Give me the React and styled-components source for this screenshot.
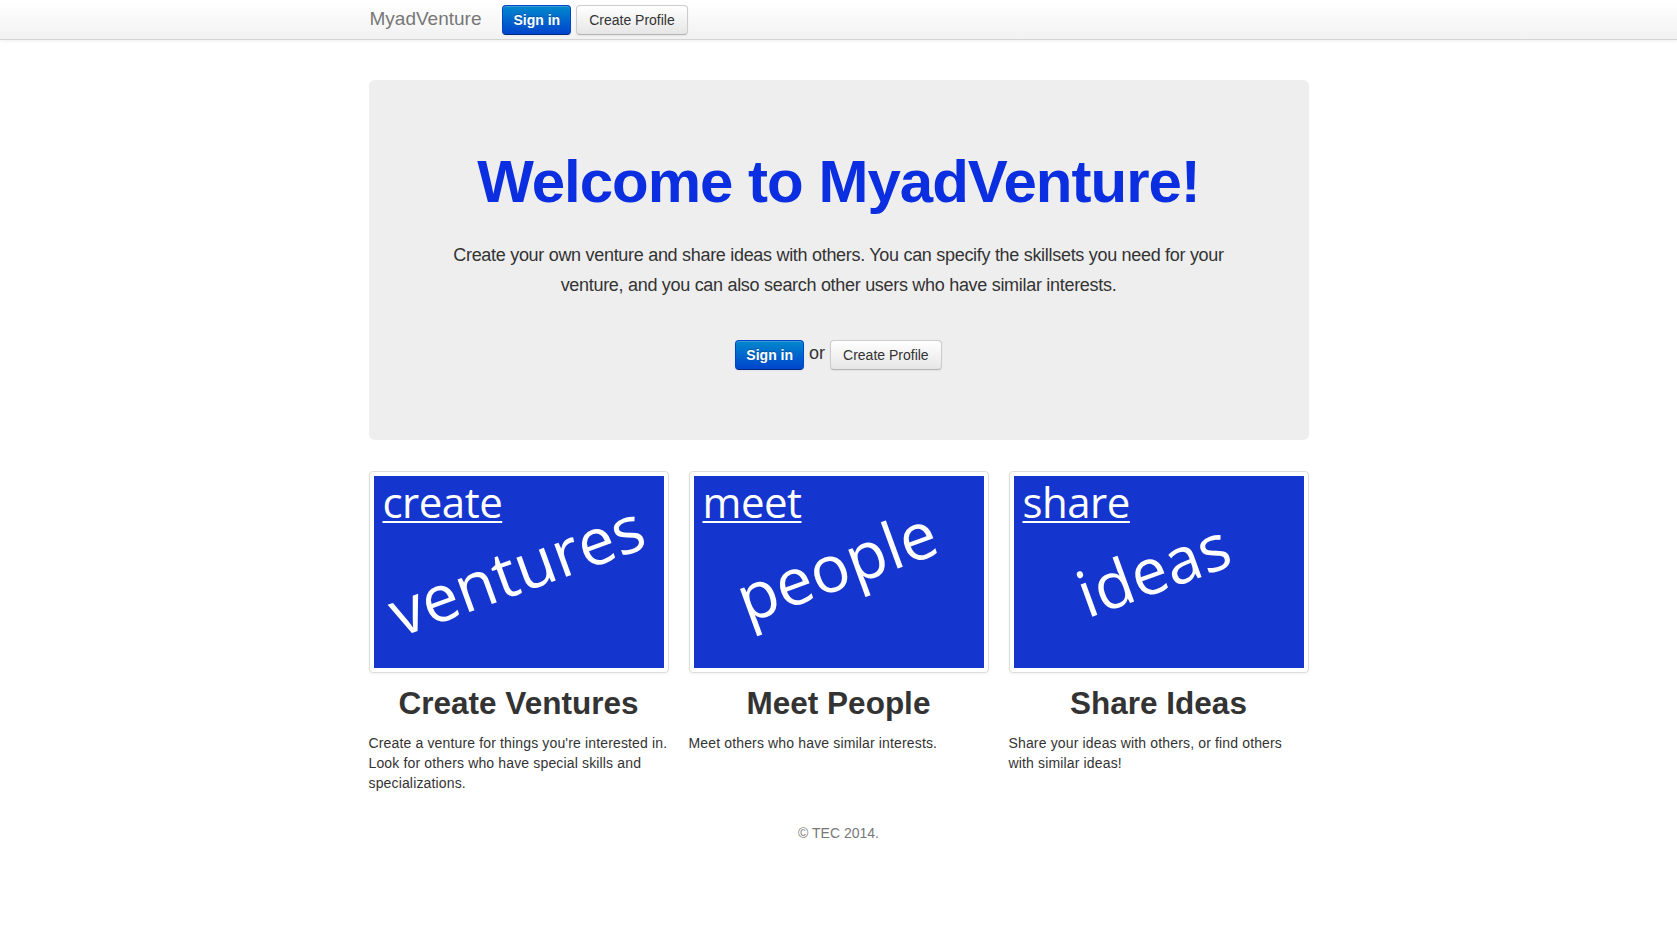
import React from "react";
import styled, { createGlobalStyle, css } from "styled-components";

const SANS = `"Liberation Sans", Arial, Helvetica, sans-serif`;
const THUMB_FONT = `"Open Sans", "Noto Sans", sans-serif`;

const features = [
  {
    key: "create",
    top: "create",
    big: "ventures",
    title: "Create Ventures",
    text: "Create a venture for things you're interested in. Look for others who have special skills and specializations.",
    bx: 142,
    by: 93,
    size: 65,
  },
  {
    key: "meet",
    top: "meet",
    big: "people",
    title: "Meet People",
    text: "Meet others who have similar interests.",
    bx: 142,
    by: 89,
    size: 65,
  },
  {
    key: "share",
    top: "share",
    big: "ideas",
    title: "Share Ideas",
    text: "Share your ideas with others, or find others with similar ideas!",
    bx: 139,
    by: 93,
    size: 64,
  },
];

function App() {
  return (
    <>
      <GlobalStyle />
      <Navbar>
        <NavInner>
          <Brand href="#">MyadVenture</Brand>
          <Button primary>Sign in</Button>
          <Button>Create Profile</Button>
        </NavInner>
      </Navbar>
      <Container>
        <Hero>
          <HeroTitle>Welcome to MyadVenture!</HeroTitle>
          <Lead>
            Create your own venture and share ideas with others. You can
            specify the skillsets you need for your venture, and you can also
            search other users who have similar interests.
          </Lead>
          <Actions>
            <Button primary>Sign in</Button>
            <Or>or</Or>
            <Button>Create Profile</Button>
          </Actions>
        </Hero>
        <Features>
          {features.map((f) => (
            <Feature key={f.key}>
              <Thumbnail>
                <Picture>
                  <TopWord>{f.top}</TopWord>
                  <BigWord
                    size={f.size}
                    style={{ left: f.bx, top: f.by }}
                  >
                    {f.big}
                  </BigWord>
                </Picture>
              </Thumbnail>
              <FeatureTitle>{f.title}</FeatureTitle>
              <FeatureText>{f.text}</FeatureText>
            </Feature>
          ))}
        </Features>
        <Footer>© TEC 2014.</Footer>
      </Container>
    </>
  );
}

const GlobalStyle = createGlobalStyle`
  body {
    margin: 0;
    background: #fff;
    font-family: ${SANS};
    font-size: 14px;
    line-height: 20px;
    color: #333;
  }
`;

const Navbar = styled.div`
  height: 39px;
  background-image: linear-gradient(to bottom, #ffffff, #f2f2f2);
  border-bottom: 1px solid #d4d4d4;
  box-shadow: 0 1px 4px rgba(0, 0, 0, 0.065);
`;

const NavInner = styled.div`
  width: 940px;
  margin: 0 auto;
  display: flex;
  align-items: flex-start;
  gap: 5px;
`;

const Brand = styled.a`
  display: block;
  padding: 9px 16px 10px 1px;
  font-size: 19px;
  line-height: 20px;
  color: #777;
  text-decoration: none;
`;

const primaryStyle = css`
  color: #fff;
  font-weight: bold;
  padding: 4px 10px;
  background-image: linear-gradient(to bottom, #0088cc, #0044cc);
  border-color: #0044cc #0044cc #002a80;
  text-shadow: 0 -1px 0 rgba(0, 0, 0, 0.25);
`;

const Button = styled.button`
  margin-top: 5px;
  height: 30px;
  padding: 4px 12px;
  font-family: ${SANS};
  font-size: 14px;
  line-height: 20px;
  color: #333;
  background-image: linear-gradient(to bottom, #ffffff, #e6e6e6);
  border: 1px solid #cccccc;
  border-bottom-color: #b3b3b3;
  border-radius: 4px;
  box-shadow: inset 0 1px 0 rgba(255, 255, 255, 0.2),
    0 1px 2px rgba(0, 0, 0, 0.05);
  cursor: pointer;
  ${(props) => props.primary && primaryStyle}
`;

const Container = styled.div`
  width: 940px;
  margin: 0 auto;
  padding-top: 40px;
`;

const Hero = styled.div`
  padding: 60px;
  margin-bottom: 31px;
  background: #eeeeee;
  border-radius: 6px;
  text-align: center;
`;

const HeroTitle = styled.h1`
  margin: 12px 0 28px;
  font-size: 60px;
  line-height: 60px;
  font-weight: bold;
  letter-spacing: -1px;
  color: #0a2ee0;
`;

const Lead = styled.p`
  margin: 0 auto 40px;
  max-width: 790px;
  font-size: 18px;
  line-height: 30px;
  color: #333;
  letter-spacing: -0.3px;
`;

const Actions = styled.div`
  display: flex;
  justify-content: center;
  align-items: center;
  gap: 5px;
  height: 30px;
  margin-bottom: 10px;

  ${Button} {
    margin-top: 0;
  }
`;

const Or = styled.span`
  font-size: 18px;
  line-height: 24px;
  color: #333;
  margin-top: -4px;
`;

const Features = styled.div`
  display: grid;
  grid-template-columns: repeat(3, 300px);
  column-gap: 20px;
`;

const Feature = styled.div`
  display: flex;
  flex-direction: column;
`;

const Thumbnail = styled.div`
  padding: 4px;
  border: 1px solid #dddddd;
  border-radius: 4px;
  box-shadow: 0 1px 3px rgba(0, 0, 0, 0.055);
`;

const Picture = styled.div`
  position: relative;
  height: 192px;
  overflow: hidden;
  background: #1535cf;
  font-family: ${THUMB_FONT};
  color: #fff;
`;

const TopWord = styled.span`
  display: inline-block;
  margin: 2px 0 0 9px;
  font-size: 42px;
  line-height: 48px;
  text-decoration: underline;
  text-decoration-thickness: 2px;
  text-underline-offset: 3px;
  letter-spacing: -0.5px;
`;

const BigWord = styled.span`
  position: absolute;
  transform: translate(-50%, -50%) rotate(-20deg);
  font-size: ${(props) => props.size}px;
  line-height: 1;
  white-space: nowrap;
`;

const FeatureTitle = styled.h2`
  margin: 10px 0;
  font-size: 31.5px;
  line-height: 40px;
  font-weight: bold;
  text-align: center;
  color: #333;
`;

const FeatureText = styled.p`
  margin: 0 0 10px;
  font-size: 14px;
  line-height: 20px;
  letter-spacing: 0.15px;
  color: #333;
`;

const Footer = styled.p`
  margin: 20px 0 0;
  padding-bottom: 40px;
  text-align: center;
  color: #777;
`;

export default App;
